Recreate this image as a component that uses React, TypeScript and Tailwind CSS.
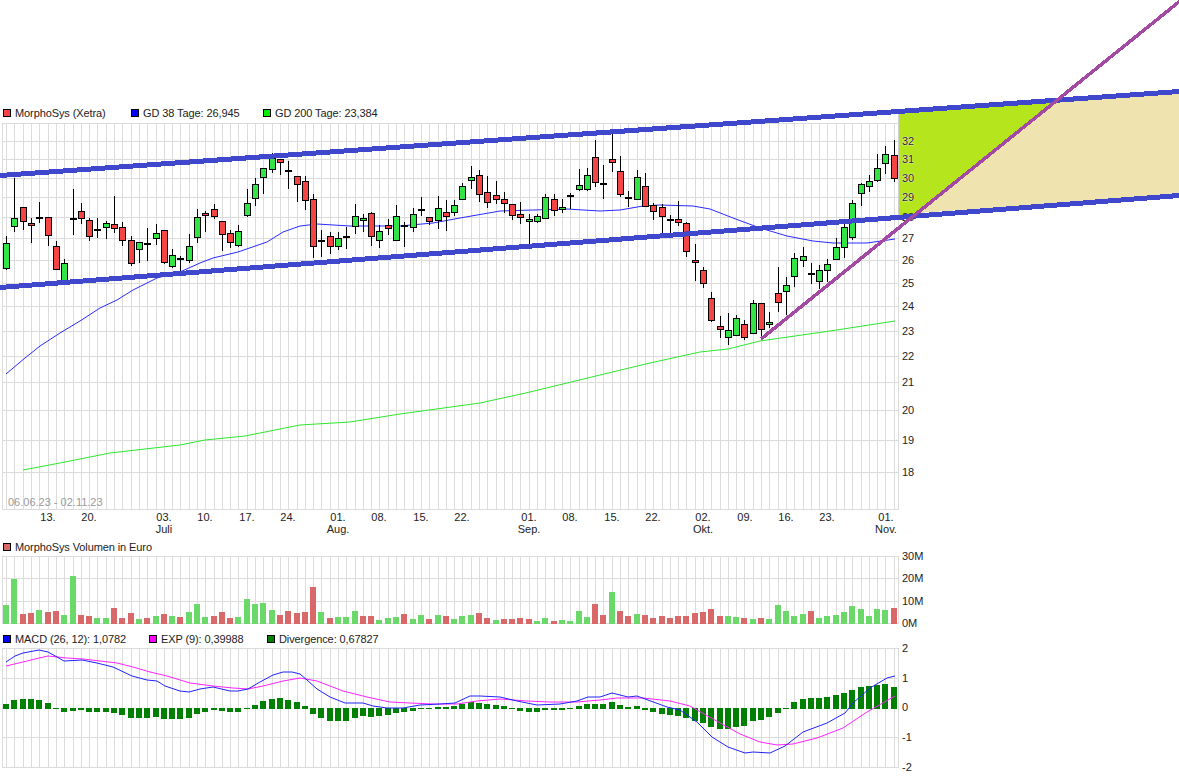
type Raw = [number, number, number, number, "r" | "g" | "d"];

// wick top, wick bottom, body top, body bottom, kind. y values are at 3x scale.
const juneToJuly: Raw[] = [
  [408, 510, 430, 506, "g"], [235, 395, 355, 382, "g"], [322, 390, 322, 367, "r"], [355, 428, 370, 379, "r"],
  [307, 368, 351, 354, "d"], [352, 437, 352, 409, "r"], [424, 510, 439, 509, "r"], [478, 545, 490, 542, "g"],
  [267, 404, 355, 358, "d"], [310, 373, 334, 358, "r"], [355, 422, 361, 412, "r"], [354, 413, 388, 394, "g"],
  [364, 416, 370, 385, "g"], [289, 398, 373, 388, "r"], [366, 437, 382, 424, "r"], [408, 499, 421, 493, "r"],
  [427, 488, 427, 451, "g"], [385, 483, 430, 433, "d"], [373, 434, 400, 418, "g"], [391, 493, 391, 490, "r"],
  [448, 505, 466, 502, "g"], [469, 514, 475, 481, "g"], [403, 490, 439, 484, "g"], [328, 428, 352, 415, "g"],
  [334, 395, 340, 349, "r"], [313, 358, 328, 352, "r"], [364, 452, 364, 406, "r"], [391, 445, 400, 430, "r"],
  [376, 440, 394, 439, "g"], [268, 352, 310, 349, "g"], [235, 317, 253, 298, "g"], [205, 283, 205, 235, "g"],
  [160, 220, 175, 211, "g"], [178, 226, 178, 190, "r"], [184, 267, 211, 217, "r"], [229, 305, 229, 256, "r"],
];

const julyToSep: Raw[] = [
  [168, 270, 184, 244, "r"], [222, 413, 238, 382, "r"], [330, 410, 361, 367, "g"], [337, 402, 349, 382, "r"],
  [337, 390, 355, 382, "g"], [322, 387, 349, 352, "d"], [252, 342, 289, 322, "g"], [282, 337, 295, 304, "g"],
  [277, 378, 280, 352, "r"], [316, 384, 334, 364, "g"], [298, 345, 316, 328, "r"], [255, 364, 289, 364, "g"],
  [307, 381, 316, 319, "d"], [265, 336, 283, 325, "g"], [232, 288, 268, 271, "d"], [292, 315, 292, 307, "r"],
  [229, 327, 265, 304, "g"], [241, 333, 277, 292, "r"], [240, 288, 256, 280, "g"], [190, 241, 199, 241, "g"],
  [139, 207, 172, 184, "g"], [151, 246, 166, 226, "r"], [169, 264, 217, 250, "r"], [184, 253, 226, 241, "r"],
  [217, 279, 238, 253, "r"], [253, 300, 253, 289, "r"], [247, 313, 283, 295, "r"], [283, 372, 298, 307, "g"],
  [283, 310, 289, 307, "g"], [223, 298, 232, 298, "g"], [223, 288, 238, 274, "r"], [238, 278, 262, 271, "g"],
  [220, 268, 226, 232, "g"], [148, 214, 196, 211, "g"], [145, 214, 166, 211, "g"], [61, 201, 112, 190, "r"],
];

const sepToNov: Raw[] = [
  [136, 236, 190, 193, "d"], [40, 157, 118, 130, "r"], [109, 232, 152, 226, "r"], [214, 262, 232, 235, "d"],
  [151, 241, 172, 241, "g"], [160, 262, 199, 262, "r"], [250, 299, 256, 277, "r"], [253, 342, 262, 292, "r"],
  [286, 340, 298, 304, "r"], [244, 319, 298, 310, "r"], [307, 410, 310, 397, "r"], [373, 482, 421, 430, "r"],
  [442, 505, 451, 493, "r"], [517, 607, 535, 604, "r"], [589, 653, 619, 631, "r"], [580, 674, 631, 655, "g"],
  [586, 649, 595, 649, "g"], [601, 661, 613, 655, "r"], [541, 643, 550, 643, "g"], [550, 652, 550, 631, "r"],
  [577, 625, 607, 616, "g"], [442, 576, 520, 550, "r"], [472, 585, 496, 517, "g"], [400, 502, 415, 472, "g"],
  [382, 442, 409, 424, "g"], [430, 493, 460, 466, "g"], [436, 508, 451, 487, "g"], [418, 487, 433, 454, "g"],
  [355, 421, 382, 421, "g"], [310, 415, 322, 385, "g"], [241, 361, 250, 355, "g"], [190, 257, 193, 223, "g"],
  [166, 217, 184, 202, "g"], [102, 187, 145, 184, "g"], [79, 163, 103, 133, "g"], [61, 187, 106, 178, "r"],
];

const toPage = (rows: Raw[], top: number) =>
  rows.map(([a, b, c, d, kind]) => ({
    wickTop: Math.round(top + a / 3),
    wickBottom: Math.round(top + b / 3),
    bodyTop: Math.round(top + c / 3),
    bodyBottom: Math.round(top + d / 3),
    kind,
  }));

const candles = [...toPage(juneToJuly, 100), ...toPage(julyToSep, 120), ...toPage(sepToNov, 120)];

// positive = green
const volumes = [
  19, 45, -10, -11, 14, -12, -13, 9, 48, -9, -8, 6, 6, -16, -6, -11, 5, -6, 8, -10, 8, -7, 12, 20, 7, -8, -12, -6, 7, 25, 20, 21, 14, -9, -13, -11,
  -12, -37, 12, -6, 7, 7, 13, -8, -8, 4, 6, 7, -10, 5, 9, -5, 9, -8, 5, 8, 9, -11, -6, 4, -5, -5, -6, -5, 3, 6, -3, 4, 3, 13, 7, -20,
  -9, 32, -13, -8, 10, -9, -6, -8, -6, -8, -8, -11, -12, -15, -8, 8, 7, -6, 5, -6, 5, 19, 13, 8, 10, -13, 6, 8, 9, 12, 18, 15, 8, 15, 14, -16,
];

const divergence = [
  5, 9, 10, 10, 9, 6, 1, -4, -3, -2, -4, -4, -4, -5, -7, -10, -10, -10, -9, -11, -11, -11, -10, -6, -4, -2, -3, -4, -4, 1, 4, 8, 10, 11, 9, 7,
  3, -6, -10, -13, -13, -13, -10, -8, -9, -8, -7, -5, -4, -3, -1, -1, 2, 2, 3, 5, 7, 6, 5, 4, 3, -1, -3, -4, -4, -2, -2, -2, -1, 3, 5, 5,
  5, 7, 4, 2, 3, -2, -4, -6, -7, -8, -10, -13, -15, -19, -21, -21, -19, -18, -13, -12, -9, -5, -1, 7, 10, 11, 11, 12, 14, 16, 19, 22, 23, 24, 25, 22,
];

const gd38 =
  "6,374 25,358 40,346 60,333 80,321 100,308 117,300 133,290 157,278 180,272 200,263 213,258 238,252 267,242 283,232 300,226 317,224 350,226 400,226 433,223 460,218 500,211 533,210 567,209 600,211 620,210 643,206 660,205 693,206 710,209 733,218 760,228 787,236 813,241 833,243 867,243 895,239";
const gd200 =
  "23,470 60,463 110,453 180,445 205,440 245,436 300,425 350,422 400,414 480,403 530,392 600,375 650,363 700,352 728,349 760,341 830,331 895,321";
const macdLine =
  "6,662 15,656 23,653 39,650 48,652 57,657 64,661 82,660 97,663 113,667 132,676 147,680 157,681 165,686 180,691 189,692 200,689 213,687 230,691 238,691 248,689 260,682 273,675 283,672 292,672 300,674 307,680 317,689 330,697 345,703 363,703 373,706 387,708 403,708 420,705 440,704 455,703 470,696 480,696 500,697 517,701 537,705 560,704 577,701 588,697 600,697 612,693 628,697 637,696 667,707 680,710 697,722 712,737 728,747 745,753 753,752 770,753 785,746 803,732 827,723 845,713 853,703 870,688 887,678 895,676";
const expLine =
  "6,666 23,662 39,658 48,656 67,658 83,659 100,661 117,663 133,667 150,672 167,676 190,683 213,686 233,688 248,689 263,686 283,681 300,678 317,681 343,691 367,697 390,702 410,703 433,704 457,704 477,701 500,699 527,701 550,702 577,702 600,700 617,698 643,698 670,701 690,706 713,719 740,734 760,742 777,745 793,744 817,738 843,728 867,712 895,696";

const priceTicks = [
  { label: "32", y: 141 }, { label: "31", y: 159 }, { label: "30", y: 178 }, { label: "29", y: 197 },
  { label: "28", y: 217 }, { label: "27", y: 238 }, { label: "26", y: 260 }, { label: "25", y: 283 },
  { label: "24", y: 306 }, { label: "23", y: 331 }, { label: "22", y: 356 }, { label: "21", y: 382 },
  { label: "20", y: 410 }, { label: "19", y: 440 }, { label: "18", y: 472 },
];

const days = [
  { label: "13.", x: 48 }, { label: "20.", x: 89 }, { label: "03.", x: 164 }, { label: "10.", x: 205 },
  { label: "17.", x: 247 }, { label: "24.", x: 288 }, { label: "01.", x: 338 }, { label: "08.", x: 379 },
  { label: "15.", x: 421 }, { label: "22.", x: 462 }, { label: "01.", x: 529 }, { label: "08.", x: 570 },
  { label: "15.", x: 612 }, { label: "22.", x: 653 }, { label: "02.", x: 703 }, { label: "09.", x: 745 },
  { label: "16.", x: 786 }, { label: "23.", x: 827 }, { label: "01.", x: 886 },
];

const months = [
  { label: "Juli", x: 164 }, { label: "Aug.", x: 338 }, { label: "Sep.", x: 529 }, { label: "Okt.", x: 703 }, { label: "Nov.", x: 886 },
];

const candleX = (i: number) => Math.floor(6.7 + 8.295 * i);

function Grid({ top, bottom, rows }: { top: number; bottom: number; rows: number[] }) {
  return (
    <g stroke="#dcdcdc" shapeRendering="crispEdges">
      {[top, ...rows, bottom].map((y) => (
        <line key={y} x1={2} x2={899} y1={y + 0.5} y2={y + 0.5} />
      ))}
      <line x1={2.5} x2={2.5} y1={top} y2={bottom} />
      {candles.map((_, i) => (
        <line key={i} x1={candleX(i) + 0.5} x2={candleX(i) + 0.5} y1={top} y2={bottom} />
      ))}
      <line x1={898.5} x2={898.5} y1={top} y2={bottom} />
    </g>
  );
}

function Legend({ items }: { items: { color: string; label: string; width?: string }[] }) {
  return (
    <div className="flex h-[16px] items-center pl-[3px]">
      {items.map((item) => (
        <div key={item.label} className={`flex items-center gap-[4px] ${item.width ?? ""}`}>
          <span className="size-[8px] border border-black" style={{ backgroundColor: item.color }} />
          <span className="whitespace-nowrap tracking-[-0.1px]">{item.label}</span>
        </div>
      ))}
    </div>
  );
}

function AxisLabel({ x, y, children, halo }: { x: number; y: number; children: string; halo?: boolean }) {
  return (
    <text x={x} y={y + 4} className="fill-[#222] text-[11px]" stroke={halo ? "#fff" : undefined} strokeWidth={halo ? 0.6 : undefined} paintOrder="stroke">
      {children}
    </text>
  );
}

function PriceChart() {
  return (
    <svg viewBox="0 121 1179 418" className="block h-[418px] w-[1179px] overflow-visible">
      <Grid top={123} bottom={509} rows={priceTicks.map((t) => t.y)} />
      <polyline points={gd38} fill="none" stroke="#2a2aff" />
      <polyline points={gd200} fill="none" stroke="#2ee62e" />
      <g shapeRendering="crispEdges">
        {candles.map((c, i) => {
          const x = candleX(i);
          return (
            <g key={i}>
              <line x1={x + 0.5} x2={x + 0.5} y1={c.wickTop} y2={c.wickBottom} stroke="#000" />
              {c.kind === "d" ? (
                <rect x={x - 3} y={c.bodyTop} width={7} height={2} fill="#000" />
              ) : (
                <rect
                  x={x - 2.5}
                  y={c.bodyTop + 0.5}
                  width={6}
                  height={Math.max(c.bodyBottom - c.bodyTop - 1, 1)}
                  fill={c.kind === "r" ? "#f44444" : "#33e544"}
                  stroke="#000"
                />
              )}
            </g>
          );
        })}
      </g>
      <text x={8} y={506} className="fill-[#9a9a9a] text-[11px]">06.06.23 - 02.11.23</text>
      {days.map((d) => (
        <text key={d.x} x={d.x} y={521} textAnchor="middle" className="fill-[#222] text-[11px]">{d.label}</text>
      ))}
      {months.map((m) => (
        <text key={m.x} x={m.x} y={533} textAnchor="middle" className="fill-[#222] text-[11px]">{m.label}</text>
      ))}
      {/* hand drawn channel on top of the chart */}
      <g shapeRendering="crispEdges">
        <polygon points="899,112 1058,99 917,213 899,216" fill="#b5e61d" />
        <polygon points="1058,99 1179,90 1179,195 917,213" fill="#efe4b0" />
      </g>
      <line x1={898.5} x2={898.5} y1={112} y2={217} stroke="#cfcfcf" shapeRendering="crispEdges" />
      {priceTicks.map((t) => (
        <AxisLabel key={t.label} x={902} y={t.y} halo={Number(t.label) >= 29}>{t.label}</AxisLabel>
      ))}
      <g fill="none" shapeRendering="crispEdges">
        <line x1={0} y1={175.5} x2={1179} y2={91.5} stroke="#3f48cc" strokeWidth={5} />
        <line x1={0} y1={287.5} x2={1179} y2={195.5} stroke="#3f48cc" strokeWidth={5} />
        <line x1={761} y1={339} x2={1180} y2={1} stroke="#a349a4" strokeWidth={3.5} />
      </g>
    </svg>
  );
}

function VolumeChart() {
  return (
    <svg viewBox="0 555 1179 76" className="block h-[76px] w-[1179px] overflow-visible">
      <Grid top={556} bottom={623} rows={[578, 601]} />
      <g shapeRendering="crispEdges">
        {volumes.map((v, i) => (
          <rect key={i} x={candleX(i) - 3} y={624 - Math.abs(v)} width={6} height={Math.abs(v)} fill={v > 0 ? "#6ad96a" : "#d96969"} />
        ))}
      </g>
      <AxisLabel x={902} y={556}>30M</AxisLabel>
      <AxisLabel x={902} y={578}>20M</AxisLabel>
      <AxisLabel x={902} y={601}>10M</AxisLabel>
      <AxisLabel x={902} y={623}>0M</AxisLabel>
    </svg>
  );
}

function MacdChart() {
  return (
    <svg viewBox="0 647 1179 130" className="block h-[130px] w-[1179px] overflow-visible">
      <Grid top={648} bottom={767} rows={[678, 737]} />
      <g shapeRendering="crispEdges">
        {divergence.map((v, i) => (
          <rect key={i} x={candleX(i) - 3} y={v > 0 ? 709 - v : 708} width={6} height={Math.abs(v)} fill="#008000" />
        ))}
      </g>
      <polyline points={expLine} fill="none" stroke="#ff22ff" />
      <polyline points={macdLine} fill="none" stroke="#2222ff" />
      <AxisLabel x={902} y={648}>2</AxisLabel>
      <AxisLabel x={902} y={678}>1</AxisLabel>
      <AxisLabel x={902} y={707}>0</AxisLabel>
      <AxisLabel x={902} y={737}>-1</AxisLabel>
      <AxisLabel x={902} y={767}>-2</AxisLabel>
    </svg>
  );
}

export default function App() {
  return (
    <div className="h-[777px] w-[1179px] overflow-hidden bg-white pt-[105px] font-['Liberation_Sans',Arial,sans-serif] text-[11px] leading-none text-[#222]">
      <Legend
        items={[
          { color: "#f44444", label: "MorphoSys (Xetra)", width: "w-[128px]" },
          { color: "#0000ff", label: "GD 38 Tage: 26,945", width: "w-[132px]" },
          { color: "#00ee00", label: "GD 200 Tage: 23,384" },
        ]}
      />
      <PriceChart />
      <Legend items={[{ color: "#d96969", label: "MorphoSys Volumen in Euro" }]} />
      <VolumeChart />
      <Legend
        items={[
          { color: "#0000ff", label: "MACD (26, 12): 1,0782", width: "w-[146px]" },
          { color: "#ff00ff", label: "EXP (9): 0,39988", width: "w-[118px]" },
          { color: "#008000", label: "Divergence: 0,67827" },
        ]}
      />
      <MacdChart />
    </div>
  );
}
